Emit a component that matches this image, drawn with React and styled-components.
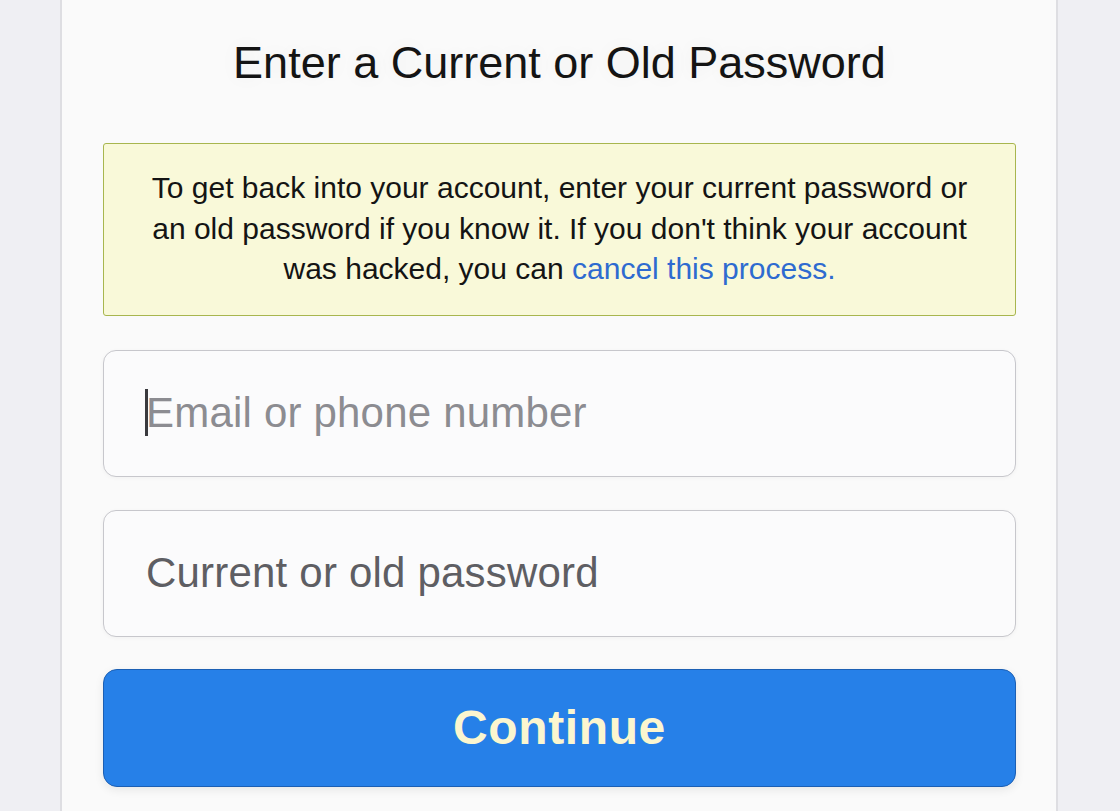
import React from "react";
import styled, { createGlobalStyle } from "styled-components";

const Global = createGlobalStyle`
  html, body { margin: 0; padding: 0; }
  body {
    background: #efeff3;
    font-family: "Liberation Sans", Arial, sans-serif;
  }
`;

const Page = styled.div`
  min-height: 811px;
  display: flex;
`;

const Card = styled.main`
  margin-left: 60px;
  width: 998px;
  min-height: 811px;
  box-sizing: border-box;
  background: #fafafa;
  border-left: 2px solid #dedee2;
  border-right: 2px solid #dedee2;
  padding: 38px 40px 0 41px;
  display: flex;
  flex-direction: column;
`;

const Title = styled.h1`
  margin: 0 0 55px;
  font-size: 45px;
  line-height: 50px;
  font-weight: 400;
  color: #141414;
  text-align: center;
  text-shadow: 0 0 18px rgba(0, 0, 0, 0.06);
`;

const Notice = styled.div`
  background: #f9f9d9;
  border: 1.5px solid #a8b64e;
  border-radius: 3px;
  padding: 24px 30px 25px;
  font-size: 30px;
  line-height: 40.5px;
  color: #141414;
  text-align: center;
  margin-bottom: 34px;
`;

const Line = styled.span`
  display: block;
  white-space: nowrap;
`;

const Link = styled.a`
  color: #2e6bd0;
  text-decoration: none;
`;

const Field = styled.div`
  position: relative;
  margin-bottom: ${(p) => p.$gap}px;
`;

const Input = styled.input`
  display: block;
  width: 100%;
  box-sizing: border-box;
  height: 127px;
  border: 1.5px solid #c7c7cc;
  border-radius: 13px;
  background: #fbfbfc;
  padding: 0 40px 0 42px;
  font-family: "Liberation Sans", Arial, sans-serif;
  font-size: 42px;
  letter-spacing: 0.2px;
  color: #222;
  outline: none;
  box-shadow: 0 1px 4px rgba(0, 0, 0, 0.04);
  &::placeholder {
    color: ${(p) => p.$ph};
    opacity: 1;
  }
`;

const Caret = styled.span`
  position: absolute;
  left: 42px;
  top: 39px;
  width: 3px;
  height: 47px;
  background: #3a3a3e;
`;

const Button = styled.button`
  display: block;
  width: 100%;
  height: 118px;
  border: 1.5px solid #1b5fb4;
  border-radius: 14px;
  background: #2680e8;
  color: #fbf6cf;
  font-family: "Liberation Sans", Arial, sans-serif;
  font-weight: 700;
  font-size: 48px;
  letter-spacing: 0.6px;
  cursor: pointer;
  box-shadow: 0 3px 10px rgba(0, 0, 0, 0.08);
`;

export default function App() {
  return (
    <>
      <Global />
      <Page>
        <Card>
          <Title>Enter a Current or Old Password</Title>
          <Notice>
            <Line>To get back into your account, enter your current password or</Line>
            <Line>an old password if you know it. If you don't think your account</Line>
            <Line>
              was hacked, you can <Link href="#">cancel this process.</Link>
            </Line>
          </Notice>
          <Field $gap={33}>
            <Input type="text" placeholder="Email or phone number" $ph="#8c8c91" />
            <Caret />
          </Field>
          <Field $gap={32}>
            <Input type="password" placeholder="Current or old password" $ph="#5e5e63" />
          </Field>
          <Button type="button">Continue</Button>
        </Card>
      </Page>
    </>
  );
}
